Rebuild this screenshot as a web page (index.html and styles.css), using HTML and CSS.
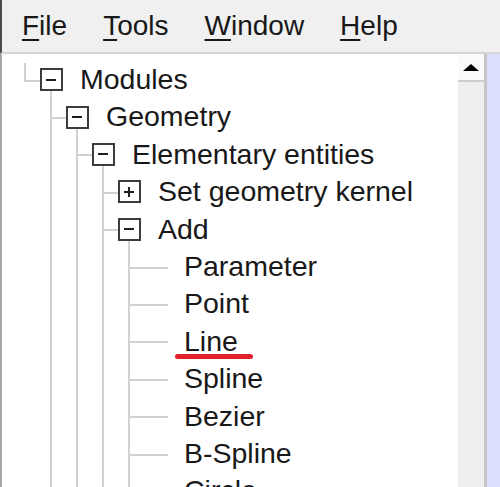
FILE: index.html
```html
<!DOCTYPE html>
<html>
<head>
<meta charset="utf-8">
<link rel="stylesheet" href="styles.css">
</head>
<body>
<div class="menubar">
  <span class="menu"><u>F</u>ile</span>
  <span class="menu"><u>T</u>ools</span>
  <span class="menu"><u>W</u>indow</span>
  <span class="menu"><u>H</u>elp</span>
</div>
<div class="main">
  <div class="tree">
    <div class="row">
      <span class="col root"></span>
      <span class="col node open"><span class="box minus"></span></span>
      <span class="label">Modules</span>
    </div>
    <div class="row">
      <span class="col"></span>
      <span class="col tee"></span>
      <span class="col node open"><span class="box minus"></span></span>
      <span class="label">Geometry</span>
    </div>
    <div class="row">
      <span class="col"></span>
      <span class="col v"></span>
      <span class="col tee"></span>
      <span class="col node open"><span class="box minus"></span></span>
      <span class="label">Elementary entities</span>
    </div>
    <div class="row">
      <span class="col"></span>
      <span class="col v"></span>
      <span class="col v"></span>
      <span class="col tee"></span>
      <span class="col node"><span class="box plus"></span></span>
      <span class="label">Set geometry kernel</span>
    </div>
    <div class="row">
      <span class="col"></span>
      <span class="col v"></span>
      <span class="col v"></span>
      <span class="col tee"></span>
      <span class="col node open"><span class="box minus"></span></span>
      <span class="label">Add</span>
    </div>
    <div class="row">
      <span class="col"></span><span class="col v"></span><span class="col v"></span><span class="col v"></span>
      <span class="col tee"></span><span class="col leaf"></span>
      <span class="label">Parameter</span>
    </div>
    <div class="row">
      <span class="col"></span><span class="col v"></span><span class="col v"></span><span class="col v"></span>
      <span class="col tee"></span><span class="col leaf"></span>
      <span class="label">Point</span>
    </div>
    <div class="row">
      <span class="col"></span><span class="col v"></span><span class="col v"></span><span class="col v"></span>
      <span class="col tee"></span><span class="col leaf"></span>
      <span class="label marked">Line</span>
    </div>
    <div class="row">
      <span class="col"></span><span class="col v"></span><span class="col v"></span><span class="col v"></span>
      <span class="col tee"></span><span class="col leaf"></span>
      <span class="label">Spline</span>
    </div>
    <div class="row">
      <span class="col"></span><span class="col v"></span><span class="col v"></span><span class="col v"></span>
      <span class="col tee"></span><span class="col leaf"></span>
      <span class="label">Bezier</span>
    </div>
    <div class="row">
      <span class="col"></span><span class="col v"></span><span class="col v"></span><span class="col v"></span>
      <span class="col tee"></span><span class="col leaf"></span>
      <span class="label">B-Spline</span>
    </div>
    <div class="row">
      <span class="col"></span><span class="col v"></span><span class="col v"></span><span class="col v"></span>
      <span class="col tee"></span><span class="col leaf"></span>
      <span class="label">Circle</span>
    </div>
  </div>
  <div class="vscroll">
    <div class="up"><span class="arrow"></span></div>
    <div class="track"></div>
  </div>
  <div class="divider"></div>
  <div class="side"></div>
</div>
</body>
</html>
```

FILE: styles.css
```css
html, body {
  margin: 0;
  padding: 0;
}
body {
  width: 500px;
  height: 487px;
  overflow: hidden;
  display: flex;
  flex-direction: column;
  font-family: "Liberation Sans", Arial, sans-serif;
  color: #181818;
  background: #ffffff;
}
.menubar {
  flex: 0 0 52px;
  height: 52px;
  display: flex;
  align-items: center;
  background: #f0f0f0;
  border-left: 2px solid #4a4a4a;
  border-bottom: 2px solid #d6d6d6;
  padding-left: 2px;
  box-sizing: content-box;
  font-size: 28px;
  line-height: 52px;
}
.menu {
  padding: 0 18px;
}
.menu u {
  text-decoration: underline;
  text-decoration-thickness: 2px;
  text-underline-offset: 4px;
}
.main {
  flex: 1;
  display: flex;
  min-height: 0;
}
.tree {
  flex: 1;
  background: #ffffff;
  border-left: 2px solid #a8a8a8;
  padding-top: 7px;
  padding-left: 10px;
  overflow: hidden;
  font-size: 28.5px;
}
.row {
  display: flex;
  align-items: stretch;
  height: 37.4px;
  line-height: 37.4px;
  white-space: nowrap;
}
.col {
  position: relative;
  flex: 0 0 26px;
  width: 26px;
}
.col.v::before,
.col.tee::before {
  content: "";
  position: absolute;
  left: 12px;
  top: 0;
  bottom: 0;
  width: 2px;
  background: #d2d2d2;
}
.col.tee::after,
.col.root::after {
  content: "";
  position: absolute;
  left: 12px;
  right: -2px;
  top: 50%;
  height: 2px;
  background: #d2d2d2;
}
.col.root::before {
  content: "";
  position: absolute;
  left: 12px;
  top: 2px;
  height: calc(50% - 1px);
  width: 2px;
  background: #d2d2d2;
}
.col.leaf::after {
  content: "";
  position: absolute;
  left: 0;
  right: 0;
  top: 50%;
  height: 2px;
  background: #d2d2d2;
}
.col.node {
  display: flex;
  align-items: center;
  justify-content: center;
}
.col.node.open::before {
  content: "";
  position: absolute;
  left: 12px;
  top: 50%;
  bottom: 0;
  width: 2px;
  background: #d2d2d2;
}
.box {
  position: relative;
  z-index: 1;
  width: 23px;
  height: 23px;
  box-sizing: border-box;
  border: 2px solid #3c3c3c;
  background: #ffffff;
}
.box::before {
  content: "";
  position: absolute;
  left: 4.5px;
  top: 8.5px;
  width: 10px;
  height: 2px;
  background: #1e1e1e;
}
.box.plus::after {
  content: "";
  position: absolute;
  left: 8.5px;
  top: 4.5px;
  width: 2px;
  height: 10px;
  background: #1e1e1e;
}
.label {
  position: relative;
  margin-left: 16px;
}
.label.marked::after {
  content: "";
  position: absolute;
  left: -9px;
  width: 78px;
  top: 31px;
  height: 5px;
  border-radius: 3px;
  background: #e1222b;
}
.vscroll {
  flex: 0 0 26px;
  display: flex;
  flex-direction: column;
  background: #f0f0f0;
}
.up {
  flex: 0 0 26px;
  height: 26px;
  background: #fbfbfb;
  border-bottom: 2px solid #cdcdcd;
  display: flex;
  align-items: center;
  justify-content: center;
}
.arrow {
  width: 0;
  height: 0;
  border-left: 8px solid transparent;
  border-right: 8px solid transparent;
  border-bottom: 7px solid #000000;
  margin-right: 1px;
}
.track {
  flex: 1;
  background: #efefef;
}
.divider {
  flex: 0 0 3px;
  background: #c6c6c6;
}
.side {
  flex: 0 0 13px;
  background: #dcdffb;
}
```
